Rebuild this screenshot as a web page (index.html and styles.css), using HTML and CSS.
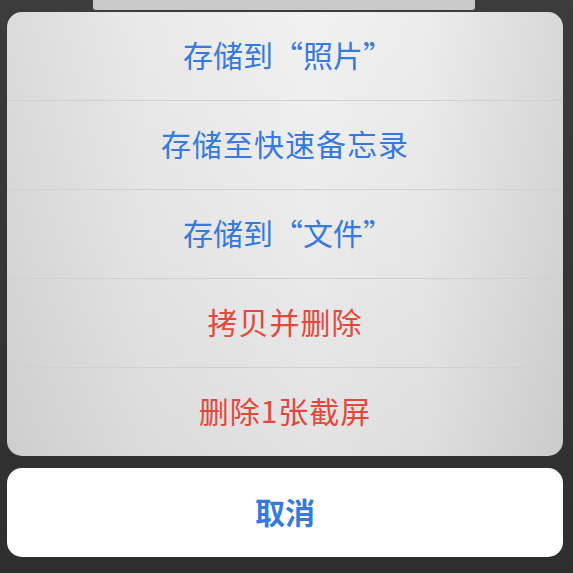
FILE: index.html
```html
<!DOCTYPE html>
<html lang="zh-CN">
<head>
    <meta charset="UTF-8">
    <meta name="viewport" content="width=device-width, initial-scale=1.0">
    <title>存储截屏</title>
    <link rel="stylesheet" href="styles.css">
</head>
<body>
    <div class="peek"></div>

    <div class="sheet-wrap">
        <div class="sheet">
            <button class="sheet-item quoted">存储到“照片”</button>
            <button class="sheet-item">存储至快速备忘录</button>
            <button class="sheet-item quoted">存储到“文件”</button>
            <button class="sheet-item danger">拷贝并删除</button>
            <button class="sheet-item danger">删除1张截屏</button>
        </div>

        <button class="cancel">取消</button>
    </div>
</body>
</html>
```

FILE: styles.css
```css
body {
    margin: 0;
    padding: 0;
    height: 573px;
    overflow: hidden;
    background: linear-gradient(180deg, #3c3c3c 0%, #343434 60%, #2e2e2e 100%);
    font-family: "Noto Sans CJK SC", "Noto Sans", sans-serif;
}

.peek {
    height: 10px;
    margin: 0 98px 0 93px;
    background: #c9c9c9;
    border-radius: 0 0 3px 3px;
}

.sheet-wrap {
    padding: 2px 10px 0 7px;
    display: flex;
    flex-direction: column;
    gap: 12px;
}

.sheet {
    display: flex;
    flex-direction: column;
    border-radius: 15px;
    overflow: hidden;
    background:
        linear-gradient(90deg, rgba(0, 0, 0, 0.09) 0%, rgba(0, 0, 0, 0.03) 25%, rgba(0, 0, 0, 0) 55%, rgba(0, 0, 0, 0.02) 75%, rgba(0, 0, 0, 0.1) 100%),
        linear-gradient(180deg, #f1f1f1 0%, #ebebeb 50%, #e2e2e2 100%);
}

.sheet-item {
    height: 89px;
    border: none;
    border-top: 1px solid #d0d0d0;
    background: transparent;
    font-family: inherit;
    font-size: 30px;
    letter-spacing: 1px;
    color: #3679df;
    padding: 0 0 5px;
    cursor: pointer;
}

.sheet-item:first-child {
    height: 88px;
    border-top: none;
}

.sheet-item.quoted {
    letter-spacing: 0;
    padding-left: 6px;
}

.sheet-item.danger {
    color: #e6463c;
}

.cancel {
    height: 89px;
    border: none;
    border-radius: 15px;
    background: #fff;
    font-family: inherit;
    font-size: 30px;
    font-weight: bold;
    color: #3679df;
    padding: 0 0 3px;
    cursor: pointer;
}
```
